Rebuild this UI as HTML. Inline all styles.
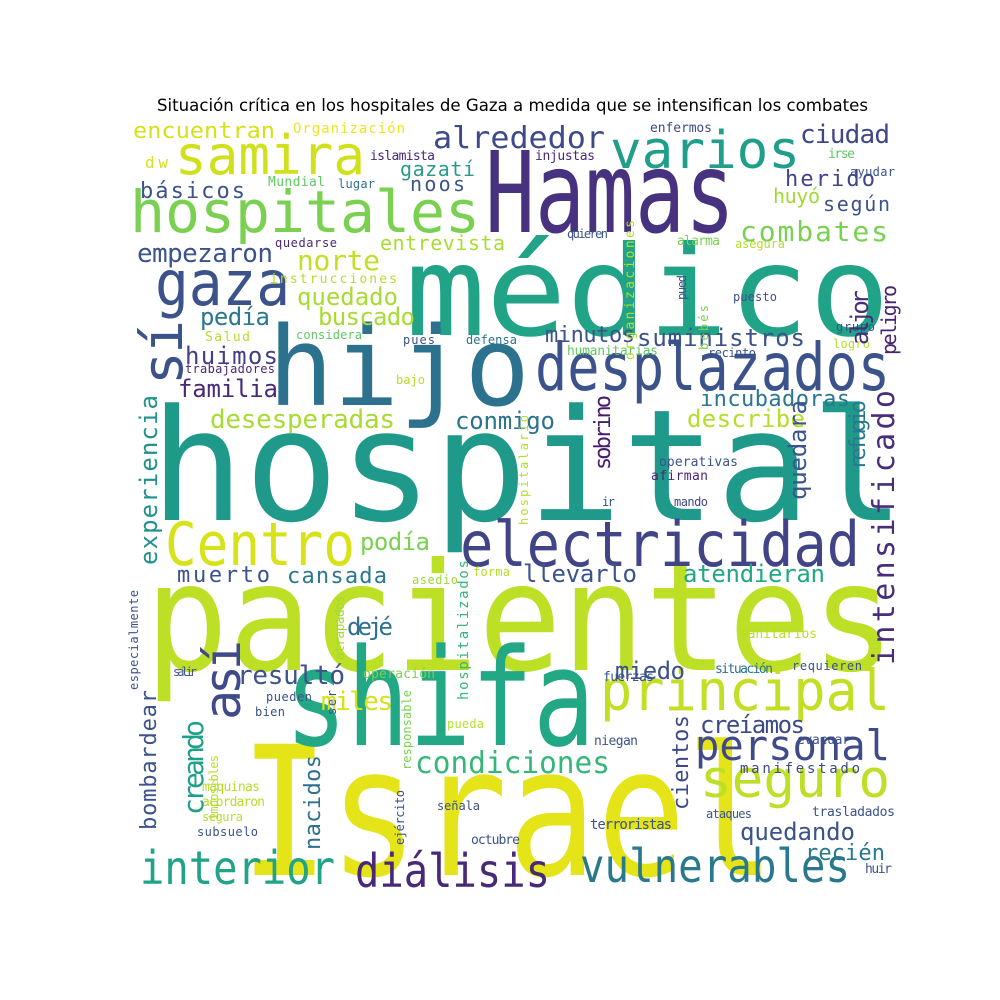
<!DOCTYPE html>
<html><head><meta charset="utf-8"><style>
html,body{margin:0;padding:0;background:#fff;width:1000px;height:1000px;overflow:hidden}
svg text{font-family:"DejaVu Sans Mono","Liberation Mono",monospace}
</style></head><body>
<svg width="1000" height="1000" viewBox="0 0 1000 1000" xmlns="http://www.w3.org/2000/svg">
<text x="157" y="111" style="font-family:'DejaVu Sans','Liberation Sans',sans-serif" font-size="16.5" fill="#000" textLength="711" lengthAdjust="spacingAndGlyphs">Situación crítica en los hospitales de Gaza a medida que se intensifican los combates</text>
<g>
<text x="150" y="520" font-size="155" fill="#1f9a8a" textLength="755" lengthAdjust="spacingAndGlyphs">hospital</text>
<text x="145" y="670" font-size="150" fill="#bddf26" textLength="750" lengthAdjust="spacingAndGlyphs">pacientes</text>
<text x="405" y="335" font-size="125" fill="#20a386" textLength="485" lengthAdjust="spacingAndGlyphs">médico</text>
<text x="485" y="232" font-size="112" fill="#46327e" textLength="250" lengthAdjust="spacingAndGlyphs">Hamas</text>
<text x="268" y="405" font-size="110" fill="#2c728e" textLength="262" lengthAdjust="spacingAndGlyphs">hijo</text>
<text x="240" y="875" font-size="180" fill="#e5e419" textLength="535" lengthAdjust="spacingAndGlyphs">Israel</text>
<text x="285" y="745" font-size="135" fill="#22a884" textLength="310" lengthAdjust="spacingAndGlyphs">shifa</text>
<text x="535" y="390" font-size="66" fill="#3b528b" textLength="355" lengthAdjust="spacingAndGlyphs">desplazados</text>
<text x="460" y="566" font-size="62" fill="#414487" textLength="400" lengthAdjust="spacingAndGlyphs">electricidad</text>
<text x="165" y="565" font-size="60" fill="#d8e219" textLength="190" lengthAdjust="spacingAndGlyphs">Centro</text>
<text x="600" y="710" font-size="56" fill="#c2df23" textLength="290" lengthAdjust="spacingAndGlyphs">principal</text>
<text x="695" y="760" font-size="42" fill="#3e4a89" textLength="195" lengthAdjust="spacingAndGlyphs">personal</text>
<text x="700" y="797" font-size="52" fill="#bddf26" textLength="190" lengthAdjust="spacingAndGlyphs">seguro</text>
<text x="580" y="882" font-size="46" fill="#2a788e" textLength="270" lengthAdjust="spacingAndGlyphs">vulnerables</text>
<text x="355" y="887" font-size="46" fill="#482878" textLength="195" lengthAdjust="spacingAndGlyphs">diálisis</text>
<text x="140" y="884" font-size="46" fill="#20a386" textLength="195" lengthAdjust="spacingAndGlyphs">interior</text>
<text x="415" y="773" font-size="30" fill="#35b779" textLength="195" lengthAdjust="spacingAndGlyphs">condiciones</text>
<text x="130" y="232" font-size="58" fill="#7ad151" textLength="350" lengthAdjust="spacingAndGlyphs">hospitales</text>
<text x="175" y="174" font-size="54" fill="#d0e11c" textLength="190" lengthAdjust="spacingAndGlyphs">samira</text>
<text x="610" y="168" font-size="52" fill="#1f9e89" textLength="190" lengthAdjust="spacingAndGlyphs">varios</text>
<text x="155" y="305" font-size="62" fill="#3b528b" textLength="135" lengthAdjust="spacingAndGlyphs">gaza</text>
<text x="433" y="148" font-size="30" fill="#3e4989" textLength="172" lengthAdjust="spacingAndGlyphs">alrededor</text>
<text x="133" y="138" font-size="22" fill="#d5e21a" textLength="142" lengthAdjust="spacingAndGlyphs">encuentran</text>
<text x="800" y="143" font-size="26" fill="#3f4788" textLength="90">ciudad</text>
<text x="785" y="186" font-size="22" fill="#414487" textLength="90">herido</text>
<text x="823" y="211" font-size="20" fill="#3b528b" textLength="67">según</text>
<text x="773" y="203" font-size="20" fill="#a0da39" textLength="47">huyó</text>
<text x="740" y="241" font-size="28" fill="#7ad151" textLength="148">combates</text>
<text x="140" y="198" font-size="22" fill="#3b528b" textLength="105">básicos</text>
<text x="400" y="176" font-size="20" fill="#2c9a8a" textLength="75">gazatí</text>
<text x="410" y="191" font-size="20" fill="#3b528b" textLength="55">noos</text>
<text x="145" y="168" font-size="16" fill="#d5e21a" textLength="23">dw</text>
<text x="293" y="133" font-size="14" fill="#f0e51c" textLength="112">Organización</text>
<text x="370" y="160" font-size="13" fill="#482878" textLength="65">islamista</text>
<text x="535" y="160" font-size="13" fill="#482878" textLength="60">injustas</text>
<text x="650" y="132" font-size="13" fill="#3e4989" textLength="62">enfermos</text>
<text x="828" y="158" font-size="13" fill="#5ec962" textLength="27">irse</text>
<text x="850" y="176" font-size="12" fill="#3b528b" textLength="45">ayudar</text>
<text x="268" y="186" font-size="13" fill="#5ec962" textLength="57">Mundial</text>
<text x="338" y="188" font-size="12" fill="#2c728e" textLength="37">lugar</text>
<text x="380" y="250" font-size="20" fill="#a8db34" textLength="125">entrevista</text>
<text x="137" y="262" font-size="26" fill="#3b528b" textLength="136">empezaron</text>
<text x="297" y="270" font-size="28" fill="#c2df23" textLength="83">norte</text>
<text x="297" y="305" font-size="24" fill="#a8db34" textLength="101">quedado</text>
<text x="318" y="325" font-size="24" fill="#a8db34" textLength="97">buscado</text>
<text x="200" y="325" font-size="24" fill="#2a788e" textLength="70">pedía</text>
<text x="185" y="364" font-size="24" fill="#433e85" textLength="93">huimos</text>
<text x="178" y="397" font-size="24" fill="#482878" textLength="100">familia</text>
<text x="545" y="342" font-size="22" fill="#3b528b" textLength="90">minutos</text>
<text x="637" y="346" font-size="24" fill="#3b528b" textLength="168">suministros</text>
<text x="700" y="406" font-size="22" fill="#2a788e" textLength="150">incubadoras</text>
<text x="687" y="427" font-size="24" fill="#b5de2b" textLength="118">describe</text>
<text x="210" y="428" font-size="26" fill="#a8db34" textLength="185">desesperadas</text>
<text x="455" y="429" font-size="24" fill="#2c728e" textLength="100">conmigo</text>
<text x="360" y="550" font-size="24" fill="#7ad151" textLength="70">podía</text>
<text x="177" y="582" font-size="22" fill="#3b528b" textLength="93">muerto</text>
<text x="287" y="583" font-size="22" fill="#2a788e" textLength="100">cansada</text>
<text x="523" y="582" font-size="24" fill="#3b528b" textLength="114">llevarlo</text>
<text x="683" y="582" font-size="24" fill="#22a884" textLength="142">atendieran</text>
<text x="347" y="635" font-size="24" fill="#2c728e" textLength="46">dejé</text>
<text x="237" y="684" font-size="26" fill="#3b528b" textLength="108">resultó</text>
<text x="615" y="679" font-size="24" fill="#3b528b" textLength="70">miedo</text>
<text x="321" y="710" font-size="26" fill="#d5e21a" textLength="72">miles</text>
<text x="700" y="733" font-size="24" fill="#3e4989" textLength="105">creíamos</text>
<text x="740" y="840" font-size="24" fill="#3b528b" textLength="115">quedando</text>
<text x="805" y="860" font-size="22" fill="#2a788e" textLength="80">recién</text>
<text x="740" y="773" font-size="14" fill="#3e4989" textLength="120">manifestado</text>
<text x="812" y="816" font-size="13" fill="#3b528b" textLength="83">trasladados</text>
<text x="865" y="873" font-size="13" fill="#3b528b" textLength="27">huir</text>
<text x="706" y="818" font-size="12" fill="#3b528b" textLength="46">ataques</text>
<text x="590" y="829" font-size="14" fill="#3b528b" textLength="82">terroristas</text>
<text x="471" y="844" font-size="13" fill="#3b528b" textLength="49">octubre</text>
<text x="437" y="810" font-size="12" fill="#3b528b" textLength="43">señala</text>
<text x="202" y="791" font-size="13" fill="#b5de2b" textLength="58">máquinas</text>
<text x="202" y="806" font-size="13" fill="#b5de2b" textLength="63">acordaron</text>
<text x="202" y="821" font-size="12" fill="#b5de2b" textLength="41">segura</text>
<text x="197" y="836" font-size="12" fill="#3b528b" textLength="61">subsuelo</text>
<text x="594" y="745" font-size="13" fill="#3b528b" textLength="44">niegan</text>
<text x="715" y="673" font-size="13" fill="#2c728e" textLength="58">situación</text>
<text x="792" y="670" font-size="12" fill="#3b528b" textLength="70">requieren</text>
<text x="603" y="681" font-size="13" fill="#3b528b" textLength="51">fuerzas</text>
<text x="797" y="744" font-size="13" fill="#3b528b" textLength="53">evacuar</text>
<text x="363" y="678" font-size="13" fill="#7ad151" textLength="72">operación</text>
<text x="266" y="701" font-size="12" fill="#3b528b" textLength="46">pueden</text>
<text x="255" y="716" font-size="12" fill="#3b528b" textLength="30">bien</text>
<text x="173" y="676" font-size="12" fill="#3b528b" textLength="24">salir</text>
<text x="412" y="584" font-size="12" fill="#a0da39" textLength="46">asedio</text>
<text x="473" y="576" font-size="12" fill="#b5de2b" textLength="37">forma</text>
<text x="740" y="638" font-size="13" fill="#b5de2b" textLength="77">sanitarios</text>
<text x="447" y="728" font-size="12" fill="#b5de2b" textLength="37">pueda</text>
<text x="659" y="466" font-size="13" fill="#3b528b" textLength="79">operativas</text>
<text x="651" y="480" font-size="13" fill="#482878" textLength="57">afirman</text>
<text x="674" y="506" font-size="12" fill="#3e4989" textLength="34">mando</text>
<text x="602" y="506" font-size="12" fill="#3b528b" textLength="13">ir</text>
<text x="205" y="341" font-size="13" fill="#b5de2b" textLength="45">Salud</text>
<text x="296" y="339" font-size="12" fill="#5ec962" textLength="66">considera</text>
<text x="185" y="373" font-size="12" fill="#482878" textLength="90">trabajadores</text>
<text x="396" y="384" font-size="12" fill="#b5de2b" textLength="29">bajo</text>
<text x="403" y="344" font-size="12" fill="#3b528b" textLength="32">pues</text>
<text x="466" y="344" font-size="12" fill="#2c728e" textLength="51">defensa</text>
<text x="567" y="355" font-size="13" fill="#5ec962" textLength="91">humanitarias</text>
<text x="708" y="357" font-size="12" fill="#3b528b" textLength="48">recinto</text>
<text x="836" y="331" font-size="12" fill="#3b528b" textLength="39">grupo</text>
<text x="833" y="348" font-size="12" fill="#b5de2b" textLength="37">logró</text>
<text x="733" y="301" font-size="12" fill="#3b528b" textLength="44">puesto</text>
<text x="677" y="245" font-size="13" fill="#7ad151" textLength="43">alarma</text>
<text x="567" y="238" font-size="12" fill="#3b528b" textLength="41">quieren</text>
<text x="735" y="248" font-size="12" fill="#b5de2b" textLength="50">asegura</text>
<text x="275" y="247" font-size="12" fill="#482878" textLength="62">quedarse</text>
<text x="270" y="283" font-size="13" fill="#b5de2b" textLength="127">instrucciones</text>
<text transform="translate(182,385) rotate(-90)" font-size="56" fill="#3b528b" textLength="65">sí</text>
<text transform="translate(240,720) rotate(-90)" font-size="50" fill="#3e4a89" textLength="80">así</text>
<text transform="translate(157,565) rotate(-90)" font-size="24" fill="#21918c" textLength="170">experiencia</text>
<text transform="translate(894,665) rotate(-90)" font-size="30" fill="#472d7b" textLength="275">intensificado</text>
<text transform="translate(868,345) rotate(-90)" font-size="24" fill="#472c7a" textLength="55">aljor</text>
<text transform="translate(896,355) rotate(-90)" font-size="20" fill="#482475" textLength="70">peligro</text>
<text transform="translate(865,470) rotate(-90)" font-size="22" fill="#2a788e" textLength="70">refugio</text>
<text transform="translate(806,500) rotate(-90)" font-size="24" fill="#3a548c" textLength="100">quedara</text>
<text transform="translate(610,470) rotate(-90)" font-size="22" fill="#481b6d" textLength="75">sobrino</text>
<text transform="translate(203,815) rotate(-90)" font-size="28" fill="#1fa088" textLength="95">creando</text>
<text transform="translate(156,830) rotate(-90)" font-size="22" fill="#3b528b" textLength="140">bombardear</text>
<text transform="translate(320,850) rotate(-90)" font-size="22" fill="#2c718e" textLength="95">nacidos</text>
<text transform="translate(688,810) rotate(-90)" font-size="22" fill="#3e4989" textLength="95">cientos</text>
<text transform="translate(468,700) rotate(-90)" font-size="14" fill="#35b779" textLength="140">hospitalizados</text>
<text transform="translate(634,360) rotate(-90)" font-size="13" fill="#b5de2b" textLength="140">organizaciones</text>
<text transform="translate(686,300) rotate(-90)" font-size="12" fill="#3b528b" textLength="25">pued</text>
<text transform="translate(708,350) rotate(-90)" font-size="12" fill="#7ad151" textLength="45">bebés</text>
<text transform="translate(528,525) rotate(-90)" font-size="12" fill="#b5de2b" textLength="110">hospitalario</text>
<text transform="translate(138,690) rotate(-90)" font-size="12" fill="#3b528b" textLength="100">especialmente</text>
<text transform="translate(344,660) rotate(-90)" font-size="13" fill="#a0da39" textLength="65">atrapados</text>
<text transform="translate(218,820) rotate(-90)" font-size="12" fill="#b5de2b" textLength="65">imposibles</text>
<text transform="translate(336,715) rotate(-90)" font-size="12" fill="#3b528b" textLength="25">ser</text>
<text transform="translate(411,770) rotate(-90)" font-size="12" fill="#7ad151" textLength="80">responsable</text>
<text transform="translate(404,845) rotate(-90)" font-size="12" fill="#3b528b" textLength="55">ejército</text>
</g>
</svg>
</body></html>
